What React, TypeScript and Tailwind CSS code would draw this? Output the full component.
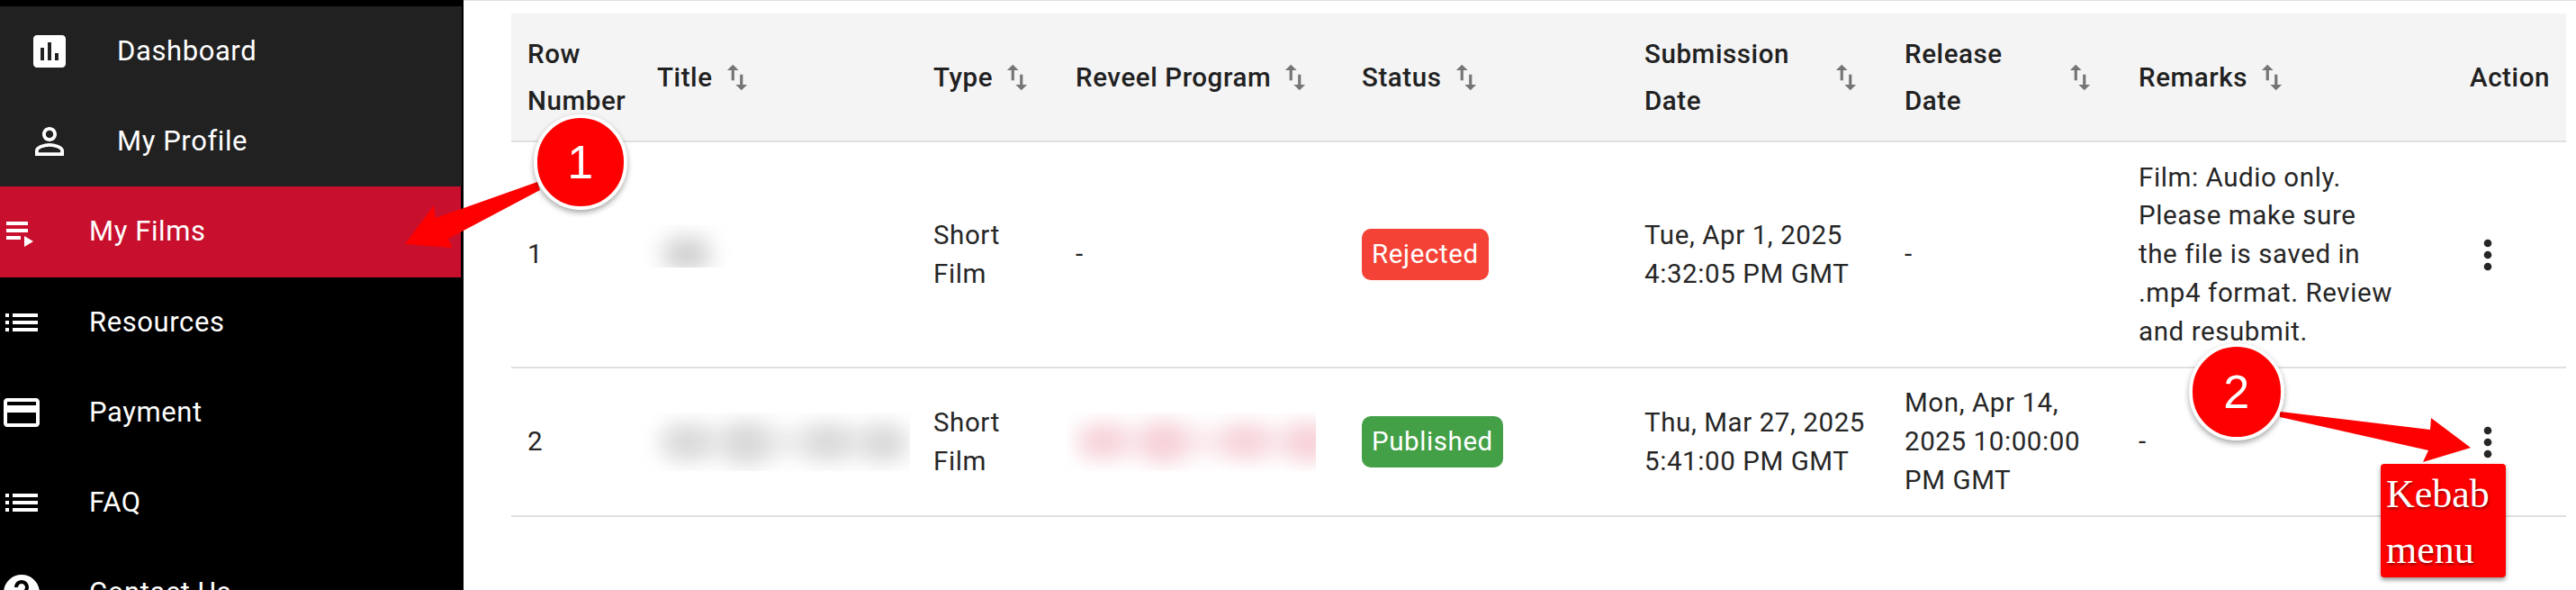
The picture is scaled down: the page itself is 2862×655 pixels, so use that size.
const icons = {
  dashboard: 'M19 3H5c-1.1 0-2 .9-2 2v14c0 1.1.9 2 2 2h14c1.1 0 2-.9 2-2V5c0-1.1-.9-2-2-2zM9 17H7v-7h2v7zm4 0h-2V7h2v10zm4 0h-2v-4h2v4z',
  person: 'M12 5.9c1.16 0 2.1.94 2.1 2.1s-.94 2.1-2.1 2.1S9.9 9.16 9.9 8s.94-2.1 2.1-2.1m0 9c2.97 0 6.1 1.46 6.1 2.1v1.1H5.9V17c0-.64 3.13-2.1 6.1-2.1M12 4C9.79 4 8 5.79 8 8s1.79 4 4 4 4-1.79 4-4-1.79-4-4-4zm0 9c-2.67 0-8 1.34-8 4v3h16v-3c0-2.66-5.33-4-8-4z',
  playlist: 'M4 10h12v2H4zm0-4h12v2H4zm0 8h8v2H4zm10 0v6l5-3z',
  list: 'M3 13h2v-2H3v2zm0 4h2v-2H3v2zm0-8h2V7H3v2zm4 4h14v-2H7v2zm0 4h14v-2H7v2zM7 7v2h14V7H7z',
  card: 'M20 4H4c-1.11 0-1.99.89-1.99 2L2 18c0 1.11.89 2 2 2h16c1.11 0 2-.89 2-2V6c0-1.11-.89-2-2-2zm0 14H4v-6h16v6zm0-10H4V6h16v2z',
  help: 'M12 2C6.48 2 2 6.48 2 12s4.48 10 10 10 10-4.48 10-10S17.52 2 12 2zm1 17h-2v-2h2v2zm2.07-7.75l-.9.92C13.45 12.9 13 13.5 13 15h-2v-.5c0-1.1.45-2.1 1.17-2.83l1.24-1.26c.37-.36.59-.86.59-1.41 0-1.1-.9-2-2-2s-2 .9-2 2H8c0-2.21 1.79-4 4-4s4 1.79 4 4c0 .88-.36 1.68-.93 2.25z',
  sort: 'M16 17.01V10h-2v7.01h-3L15 21l4-3.99h-3zM9 3L5 6.99h3V14h2V6.99h3L9 3z',
  more: 'M12 8c1.1 0 2-.9 2-2s-.9-2-2-2-2 .9-2 2 .9 2 2 2zm0 2c-1.1 0-2 .9-2 2s.9 2 2 2 2-.9 2-2-.9-2-2-2zm0 6c-1.1 0-2 .9-2 2s.9 2 2 2 2-.9 2-2-.9-2-2-2z',
};

function Icon({ d, className }: { d: string; className?: string }) {
  return (
    <svg viewBox="0 0 24 24" fill="currentColor" className={className}>
      <path d={d} />
    </svg>
  );
}

function SortIcon() {
  return <Icon d={icons.sort} className="w-[38px] h-[38px] shrink-0 text-[#757575]" />;
}

function HeadCell({ label, wide }: { label: React.ReactNode; wide?: boolean }) {
  return (
    <th className="px-[18px] text-left font-medium align-middle">
      <div className={`flex items-center ${wide ? 'justify-between pr-2.5' : 'gap-[8px]'}`}>
        <span>{label}</span>
        <SortIcon />
      </div>
    </th>
  );
}

function Chip({ label, className }: { label: string; className: string }) {
  return (
    <span className={`inline-flex items-center h-[57px] px-[11px] rounded-[10px] text-white ${className}`}>
      {label}
    </span>
  );
}

function Smudge({ className, blobs, color }: { className: string; blobs: string[]; color: string }) {
  return (
    <div className={`relative overflow-hidden ${className}`}>
      {blobs.map((b) => (
        <div key={b} className={`absolute rounded-full blur-[12px] ${color} ${b}`} />
      ))}
    </div>
  );
}

export default function App() {
  return (
    <div className="relative flex h-[655px] w-[2862px] overflow-hidden bg-white font-['Roboto',sans-serif] text-[29.5px] leading-[42.7px] tracking-[0.02em] text-[#262626]">
      <aside className="w-[515px] shrink-0 bg-black pt-[7px] flex flex-col text-[31px]">
        <div className="flex items-center h-[100px] w-[513px] shrink-0 bg-[#212121] text-white pl-[31px] gap-[51px]">
          <Icon d={icons.dashboard} className="w-12 h-12 shrink-0" />
          <span>Dashboard</span>
        </div>
        <div className="flex items-center h-[100px] w-[513px] shrink-0 bg-[#212121] text-white pl-[31px] gap-[51px]">
          <Icon d={icons.person} className="w-12 h-12 shrink-0" />
          <span>My Profile</span>
        </div>
        <div className="flex items-center h-[101px] w-[513px] shrink-0 bg-[#c8102e] text-white -ml-px gap-[52px]">
          <Icon d={icons.playlist} className="w-12 h-12 shrink-0" />
          <span>My Films</span>
        </div>
        {[
          { icon: icons.list, label: 'Resources' },
          { icon: icons.card, label: 'Payment' },
          { icon: icons.list, label: 'FAQ' },
          { icon: icons.help, label: 'Contact Us' },
        ].map((item) => (
          <div key={item.label} className="flex items-center h-[100px] w-[513px] shrink-0 text-white gap-[51px]">
            <Icon d={item.icon} className="w-12 h-12 shrink-0" />
            <span>{item.label}</span>
          </div>
        ))}
      </aside>

      <main className="flex-1 border-t border-[#e0e0e0] pt-3.5 pl-[53px] pr-[11px]">
        <table className="w-[2283px] table-fixed border-collapse">
          <colgroup>
            <col className="w-[144px]" />
            <col className="w-[307px]" />
            <col className="w-[158px]" />
            <col className="w-[318px]" />
            <col className="w-[314px]" />
            <col className="w-[289px]" />
            <col className="w-[260px]" />
            <col className="w-[371px]" />
            <col className="w-[122px]" />
          </colgroup>
          <thead>
            <tr className="h-[142px] bg-[#f4f4f4] border-b-2 border-[#e0e0e0] leading-[52px] text-[#212121]">
              <th className="px-[18px] text-left font-medium">
                Row
                <br />
                Number
              </th>
              <HeadCell label="Title" />
              <HeadCell label="Type" />
              <HeadCell label="Reveel Program" />
              <HeadCell label="Status" />
              <HeadCell
                wide
                label={
                  <>
                    Submission
                    <br />
                    Date
                  </>
                }
              />
              <HeadCell
                wide
                label={
                  <>
                    Release
                    <br />
                    Date
                  </>
                }
              />
              <HeadCell label="Remarks" />
              <th className="pr-[18px] text-right font-medium">Action</th>
            </tr>
          </thead>
          <tbody>
            <tr className="h-[251px] border-b-2 border-[#e0e0e0]">
              <td className="px-[18px]">1</td>
              <td>
                <Smudge
                  className="w-[102px] h-[47px] -mt-[18px]"
                  color="bg-[#cfcfcf]"
                  blobs={['left-[24px] top-[14px] w-[54px] h-[36px]']}
                />
              </td>
              <td className="px-[18px]">
                Short
                <br />
                Film
              </td>
              <td className="px-[18px]">-</td>
              <td className="px-[18px]">
                <Chip label="Rejected" className="bg-[#f44336]" />
              </td>
              <td className="px-[18px] whitespace-nowrap">
                Tue, Apr 1, 2025
                <br />
                4:32:05 PM GMT
              </td>
              <td className="px-[18px]">-</td>
              <td className="px-[18px]">
                Film: Audio only.
                <br />
                Please make sure
                <br />
                the file is saved in
                <br />
                .mp4 format. Review
                <br />
                and resubmit.
              </td>
              <td>
                <Icon d={icons.more} className="w-[52px] h-[52px] ml-[9px]" />
              </td>
            </tr>
            <tr className="h-[165px] border-b-2 border-[#e0e0e0]">
              <td className="px-[18px]">2</td>
              <td>
                <Smudge
                  className="w-[299px] h-[65px]"
                  color="bg-[#d8d8d8]"
                  blobs={[
                    'left-[22px] top-[18px] w-[270px] h-[30px] opacity-50',
                    'left-[26px] top-[16px] w-[52px] h-[34px]',
                    'left-[90px] top-[12px] w-[54px] h-[44px]',
                    'left-[182px] top-[16px] w-[52px] h-[34px]',
                    'left-[245px] top-[16px] w-[50px] h-[36px]',
                  ]}
                />
              </td>
              <td className="px-[18px]">
                Short
                <br />
                Film
              </td>
              <td className="pl-2">
                <Smudge
                  className="w-[277px] h-[65px]"
                  color="bg-[#f6d0d7]"
                  blobs={[
                    'left-[12px] top-[18px] w-[280px] h-[28px] opacity-50',
                    'left-[16px] top-[16px] w-[50px] h-[32px]',
                    'left-[82px] top-[12px] w-[52px] h-[42px]',
                    'left-[174px] top-[16px] w-[50px] h-[32px]',
                    'left-[243px] top-[14px] w-[54px] h-[38px]',
                  ]}
                />
              </td>
              <td className="px-[18px]">
                <Chip label="Published" className="bg-[#43a047]" />
              </td>
              <td className="px-[18px] whitespace-nowrap">
                Thu, Mar 27, 2025
                <br />
                5:41:00 PM GMT
              </td>
              <td className="px-[18px]">
                Mon, Apr 14,
                <br />
                2025 10:00:00
                <br />
                PM GMT
              </td>
              <td className="px-[18px]">-</td>
              <td>
                <Icon d={icons.more} className="w-[52px] h-[52px] ml-[9px]" />
              </td>
            </tr>
          </tbody>
        </table>
      </main>

      {/* annotations drawn on top of the screenshot */}
      <svg className="absolute left-0 top-0 w-[2862px] h-[655px] pointer-events-none" viewBox="0 0 2862 655">
        <polygon fill="#ff0000" points="597,202 484,242 482,228 450,271 502,275 498,265 600,211" />
        <polygon fill="#ff0000" points="2533,457 2700,477 2701,464 2745,497 2692,513 2698,500 2533,463" />
      </svg>
      <div className="absolute left-[593px] top-[127px] w-[104px] h-[106px] rounded-full bg-[#ff0000] border-4 border-white shadow-[0_3px_6px_rgba(0,0,0,0.35)] flex items-center justify-center text-white text-[52px] leading-none font-['Liberation_Sans',sans-serif]">
        1
      </div>
      <div className="absolute left-[2432px] top-[381px] w-[106px] h-[108px] rounded-full bg-[#ff0000] border-4 border-white shadow-[0_3px_6px_rgba(0,0,0,0.35)] flex items-center justify-center text-white text-[52px] leading-none font-['Liberation_Sans',sans-serif]">
        2
      </div>
      <div className="absolute left-[2645px] top-[515px] w-[139px] h-[126px] rounded-[4px] bg-[#ff0000] shadow-[0_3px_5px_rgba(0,0,0,0.4)] pl-1.5 pt-[3px] font-['Liberation_Serif',serif] text-[44px] leading-[62px] tracking-normal text-white [text-shadow:1px_2px_3px_rgba(0,0,0,0.45)]">
        Kebab
        <br />
        menu
      </div>
    </div>
  );
}
